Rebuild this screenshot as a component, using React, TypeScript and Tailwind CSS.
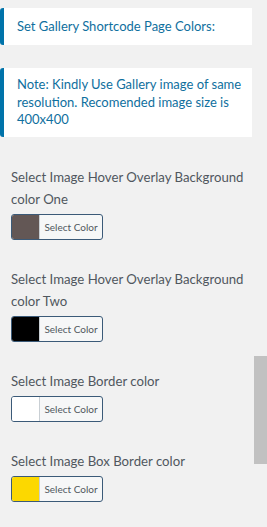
import React from "react";

const font = { fontFamily: 'Lato, "Noto Sans", sans-serif' };

function ColorRow({ label, color, first }: { label: string; color: string; first?: boolean }) {
  return (
    <div className={first ? "mt-[29px] pl-[11px]" : "mt-[28px] pl-[11px]"}>
      <div className="text-[13.2px] leading-[22px] text-[#50575e]">{label}</div>
      <div className="mt-[4px] flex h-[26px] w-[92px] overflow-hidden rounded-[3px] border border-[#3b5a78] bg-[#f6f7f7]">
        <div className="h-full w-[28px] border-r border-[#c9cfd4]" style={{ backgroundColor: color }} />
        <div className="flex flex-1 items-center justify-center text-[10px] text-[#50575e]">Select Color</div>
      </div>
    </div>
  );
}

export default function App() {
  return (
    <div className="relative h-[527px] w-[267px] overflow-hidden bg-[#f1f1f1]" style={font}>
      <div className="w-[252px] pt-[8px]">
        <div className="flex h-[37px] items-center rounded-l-[3px] border-l-[4px] border-[#0073aa] bg-white pl-[13px] text-[13px] text-[#0f6f9e]">
          Set Gallery Shortcode Page Colors:
        </div>
        <div className="mt-[23px] flex h-[69px] items-center rounded-l-[3px] border-l-[4px] border-[#0073aa] bg-white pl-[13px] pr-[6px] text-[13px] leading-[17.5px] text-[#0f6f9e]">
          Note: Kindly Use Gallery image of same resolution. Recomended image size is 400x400
        </div>
        <ColorRow first label="Select Image Hover Overlay Background color One" color="#635755" />
        <ColorRow label="Select Image Hover Overlay Background color Two" color="#000000" />
        <ColorRow label="Select Image Border color" color="#ffffff" />
        <ColorRow label="Select Image Box Border color" color="#fcd800" />
      </div>
      <div className="absolute right-0 top-[356px] h-[108px] w-[13px] bg-[#c1c1c1]" />
    </div>
  );
}
